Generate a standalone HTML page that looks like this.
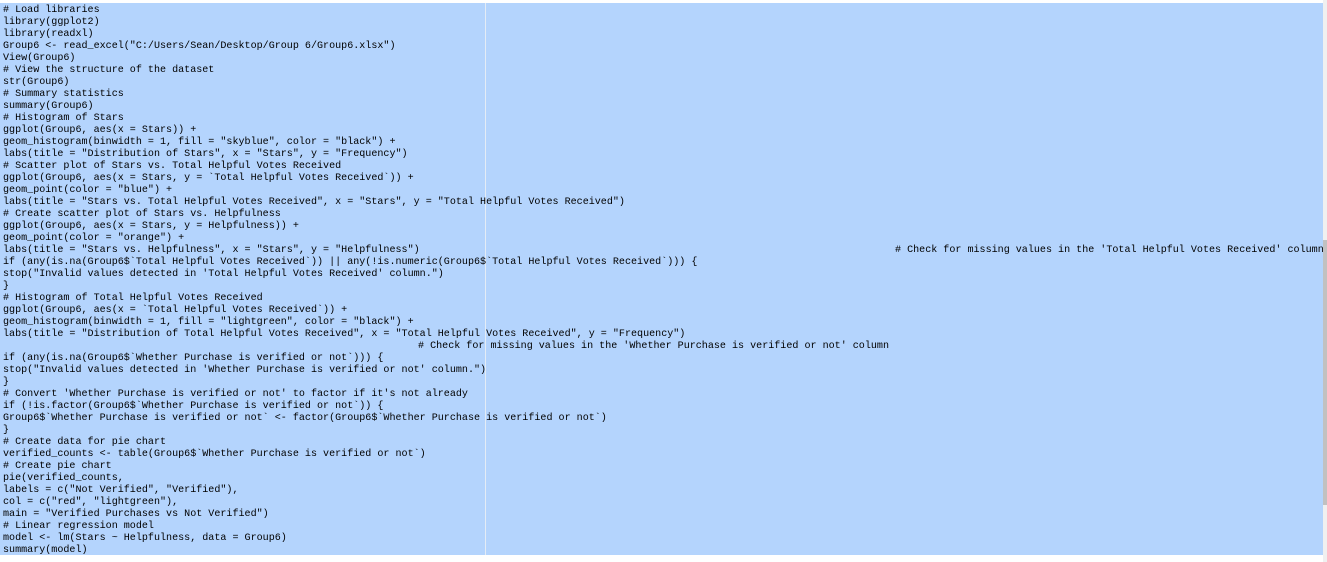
<!DOCTYPE html>
<html><head><meta charset="utf-8"><style>
html,body{margin:0;padding:0;width:1327px;height:562px;overflow:hidden;background:#fff;position:relative}
#sel{position:absolute;left:0;top:3px;width:1323px;height:552px;background:#b4d4fd}
#margin{position:absolute;left:485px;top:3px;width:1px;height:552px;background:#e4ecf6}
#sb1{position:absolute;left:1323px;top:0;width:4px;height:562px;background:#f0f0f0}
#sb2{position:absolute;left:1323px;top:240px;width:4px;height:265px;background:#c1c1c1}
#code{position:absolute;left:3px;top:5px;margin:0;font-family:"Liberation Mono",monospace;font-size:10.07px;line-height:12px;color:#000;white-space:pre}
.l{height:12px;position:relative}
.c{position:absolute;top:0}
</style></head><body>
<div id="sel"></div><div id="margin"></div><div id="sb1"></div><div id="sb2"></div>
<div id="code"><div class="l"># Load libraries</div><div class="l">library(ggplot2)</div><div class="l">library(readxl)</div><div class="l">Group6 &lt;- read_excel("C:/Users/Sean/Desktop/Group 6/Group6.xlsx")</div><div class="l">View(Group6)</div><div class="l"># View the structure of the dataset</div><div class="l">str(Group6)</div><div class="l"># Summary statistics</div><div class="l">summary(Group6)</div><div class="l"># Histogram of Stars</div><div class="l">ggplot(Group6, aes(x = Stars)) +</div><div class="l">geom_histogram(binwidth = 1, fill = "skyblue", color = "black") +</div><div class="l">labs(title = "Distribution of Stars", x = "Stars", y = "Frequency")</div><div class="l"># Scatter plot of Stars vs. Total Helpful Votes Received</div><div class="l">ggplot(Group6, aes(x = Stars, y = `Total Helpful Votes Received`)) +</div><div class="l">geom_point(color = "blue") +</div><div class="l">labs(title = "Stars vs. Total Helpful Votes Received", x = "Stars", y = "Total Helpful Votes Received")</div><div class="l"># Create scatter plot of Stars vs. Helpfulness</div><div class="l">ggplot(Group6, aes(x = Stars, y = Helpfulness)) +</div><div class="l">geom_point(color = "orange") +</div><div class="l">labs(title = "Stars vs. Helpfulness", x = "Stars", y = "Helpfulness")<span class="c" style="left:892px"># Check for missing values in the 'Total Helpful Votes Received' column</span></div><div class="l">if (any(is.na(Group6$`Total Helpful Votes Received`)) || any(!is.numeric(Group6$`Total Helpful Votes Received`))) {</div><div class="l">stop("Invalid values detected in 'Total Helpful Votes Received' column.")</div><div class="l">}</div><div class="l"># Histogram of Total Helpful Votes Received</div><div class="l">ggplot(Group6, aes(x = `Total Helpful Votes Received`)) +</div><div class="l">geom_histogram(binwidth = 1, fill = "lightgreen", color = "black") +</div><div class="l">labs(title = "Distribution of Total Helpful Votes Received", x = "Total Helpful Votes Received", y = "Frequency")</div><div class="l"><span class="c" style="left:415px"># Check for missing values in the 'Whether Purchase is verified or not' column</span></div><div class="l">if (any(is.na(Group6$`Whether Purchase is verified or not`))) {</div><div class="l">stop("Invalid values detected in 'Whether Purchase is verified or not' column.")</div><div class="l">}</div><div class="l"># Convert 'Whether Purchase is verified or not' to factor if it's not already</div><div class="l">if (!is.factor(Group6$`Whether Purchase is verified or not`)) {</div><div class="l">Group6$`Whether Purchase is verified or not` &lt;- factor(Group6$`Whether Purchase is verified or not`)</div><div class="l">}</div><div class="l"># Create data for pie chart</div><div class="l">verified_counts &lt;- table(Group6$`Whether Purchase is verified or not`)</div><div class="l"># Create pie chart</div><div class="l">pie(verified_counts,</div><div class="l">labels = c("Not Verified", "Verified"),</div><div class="l">col = c("red", "lightgreen"),</div><div class="l">main = "Verified Purchases vs Not Verified")</div><div class="l"># Linear regression model</div><div class="l">model &lt;- lm(Stars ~ Helpfulness, data = Group6)</div><div class="l">summary(model)</div></div>
</body></html>
